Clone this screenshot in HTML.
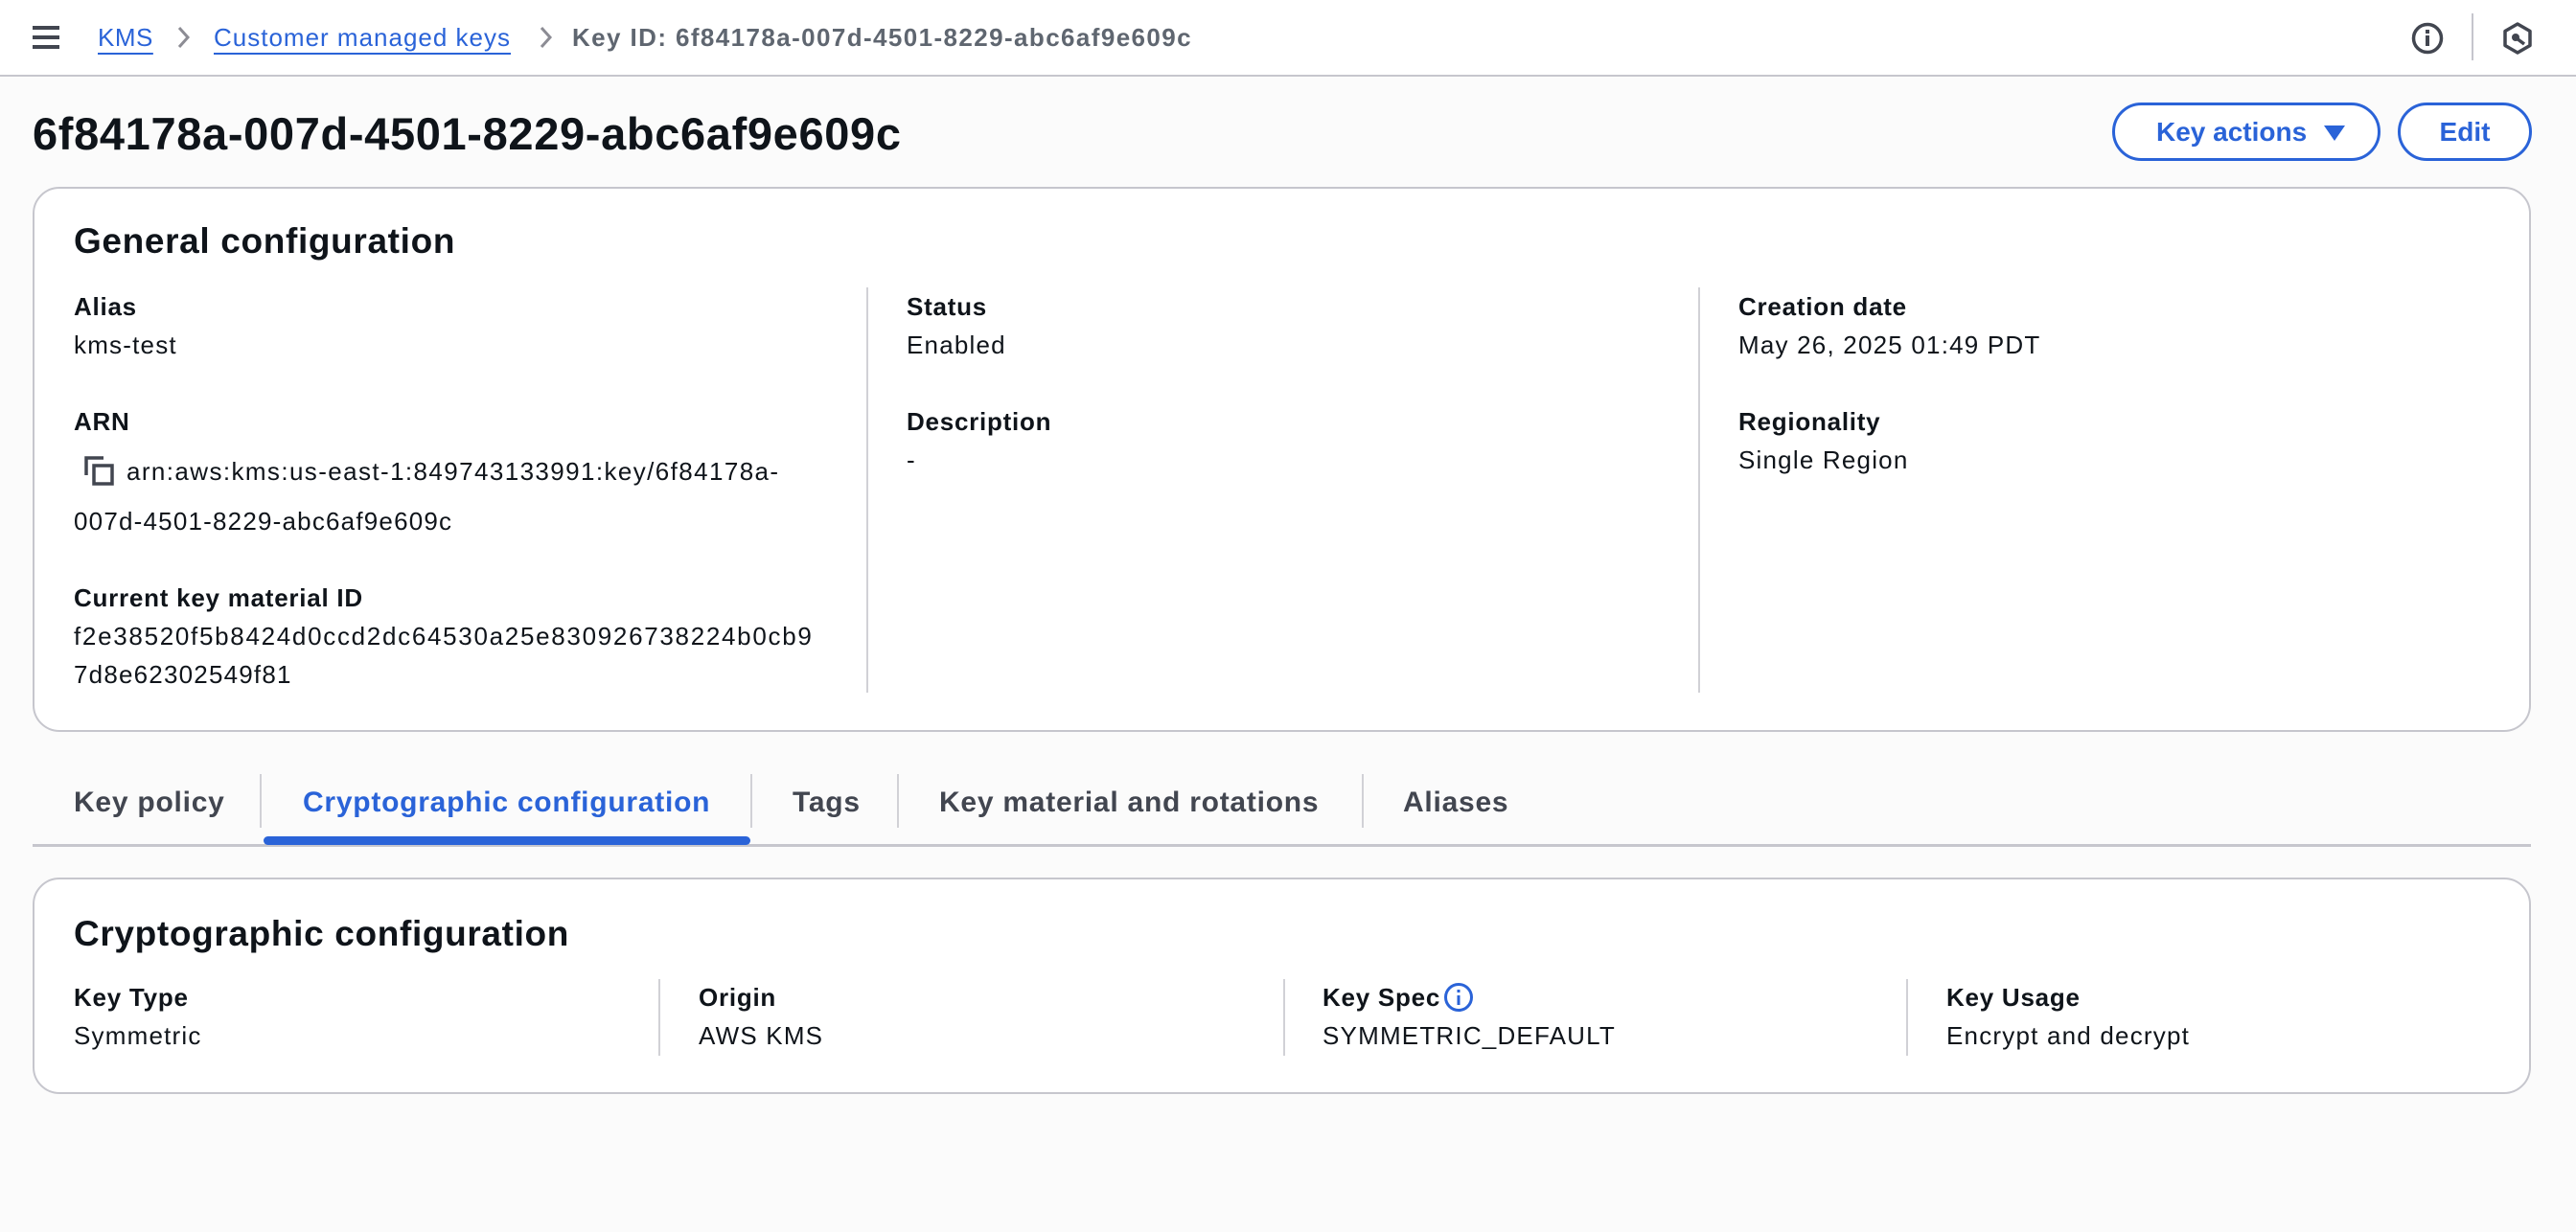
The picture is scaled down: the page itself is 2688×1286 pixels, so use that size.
<!DOCTYPE html>
<html><head><meta charset="utf-8"><style>
*{margin:0;padding:0;box-sizing:border-box}
body{width:2688px;height:1286px;background:#fbfbfb;font-family:"Liberation Sans",sans-serif;color:#0f141a;position:relative;overflow:hidden}
.a{position:absolute;white-space:nowrap}
.hdr{position:absolute;left:0;top:0;width:2688px;height:80px;background:#fff;border-bottom:2px solid #c6c6cd}
.lnk{color:#2a63d8;text-decoration:underline;text-underline-offset:7px;text-decoration-thickness:2px}
.card{position:absolute;left:34px;width:2607px;background:#fff;border:2px solid #c6c6cd;border-radius:28px}
.h2{font-size:37px;font-weight:bold;line-height:48px;letter-spacing:0.65px}
.lbl{font-size:26px;font-weight:bold;line-height:36px;letter-spacing:0.75px}
.val{font-size:26px;line-height:36px;letter-spacing:1.2px}
.vd{position:absolute;width:2px;background:#d1d1d6}
.btn{position:absolute;top:107px;height:61px;border:3px solid #2a63d8;border-radius:31px;color:#2a63d8;font-weight:bold;font-size:28px;line-height:55px;text-align:center;background:#fff}
.tab{position:absolute;top:818px;font-size:30px;font-weight:bold;line-height:40px;color:#424650;letter-spacing:0.75px}
.td{position:absolute;top:808px;height:56px;width:2px;background:#d1d1d6}
</style></head><body>
<div class="hdr"></div>
<div class="a" style="left:34px;top:27px;width:28px;height:4px;background:#424650"></div>
<div class="a" style="left:34px;top:37px;width:28px;height:4px;background:#424650"></div>
<div class="a" style="left:34px;top:47px;width:28px;height:4px;background:#424650"></div>
<div class="a lnk" style="left:102px;top:22px;font-size:26px;line-height:34px;letter-spacing:0.5px">KMS</div>
<svg class="a" style="left:184px;top:26px" width="16" height="26"><path d="M3 3 L12 13 L3 23" stroke="#8c8c94" stroke-width="3" fill="none"/></svg>
<div class="a lnk" style="left:223px;top:22px;font-size:26px;line-height:34px;letter-spacing:1px">Customer managed keys</div>
<svg class="a" style="left:562px;top:26px" width="16" height="26"><path d="M3 3 L12 13 L3 23" stroke="#8c8c94" stroke-width="3" fill="none"/></svg>
<div class="a" style="left:597px;top:22px;font-size:26px;line-height:34px;color:#5f6670;font-weight:bold;letter-spacing:1.4px">Key ID: 6f84178a-007d-4501-8229-abc6af9e609c</div>
<svg class="a" style="left:2515px;top:22px" width="36" height="36"><circle cx="18" cy="18" r="14.5" stroke="#424650" stroke-width="3.5" fill="none"/><rect x="16" y="15" width="4" height="11" fill="#424650"/><rect x="16" y="9" width="4" height="4" fill="#424650"/></svg>
<div class="a" style="left:2579px;top:14px;width:2px;height:49px;background:#c6c6cd"></div>
<svg class="a" style="left:2609px;top:22px" width="36" height="36"><path d="M18 3 L31 10.5 L31 25.5 L18 33 L5 25.5 L5 10.5 Z" stroke="#424650" stroke-width="3.5" fill="none" stroke-linejoin="round"/><circle cx="16" cy="17" r="4" fill="#424650"/><path d="M17 18 L25 24" stroke="#424650" stroke-width="3.5"/></svg>

<div class="a" style="left:34px;top:110px;font-size:47px;font-weight:bold;line-height:60px;letter-spacing:0.65px">6f84178a-007d-4501-8229-abc6af9e609c</div>
<div class="btn" style="left:2204px;width:280px;text-align:left;padding-left:43px">Key actions<svg style="position:absolute;left:217px;top:20px" width="24" height="18"><path d="M1 1 L23 1 L12 17 Z" fill="#2a63d8"/></svg></div>
<div class="btn" style="left:2502px;width:140px">Edit</div>

<div class="card" style="top:195px;height:569px"></div>
<div class="a h2" style="left:77px;top:228px">General configuration</div>
<div class="vd" style="left:904px;top:300px;height:423px"></div>
<div class="vd" style="left:1772px;top:300px;height:423px"></div>
<div class="a lbl" style="left:77px;top:302px">Alias</div>
<div class="a val" style="left:77px;top:342px">kms-test</div>
<div class="a lbl" style="left:77px;top:422px">ARN</div>
<svg class="a" style="left:88px;top:476px" width="34" height="32"><path d="M2 20 V2 H20" stroke="#424650" stroke-width="3.5" fill="none"/><rect x="10" y="10" width="19" height="19" stroke="#424650" stroke-width="3.5" fill="none"/></svg>
<div class="a val" style="left:132px;top:474px;letter-spacing:1.4px">arn:aws:kms:us-east-1:849743133991:key/6f84178a-</div>
<div class="a val" style="left:77px;top:526px">007d-4501-8229-abc6af9e609c</div>
<div class="a lbl" style="left:77px;top:606px">Current key material ID</div>
<div class="a val" style="left:77px;top:646px;letter-spacing:1.7px">f2e38520f5b8424d0ccd2dc64530a25e830926738224b0cb9</div>
<div class="a val" style="left:77px;top:686px">7d8e62302549f81</div>
<div class="a lbl" style="left:946px;top:302px">Status</div>
<div class="a val" style="left:946px;top:342px">Enabled</div>
<div class="a lbl" style="left:946px;top:422px">Description</div>
<div class="a val" style="left:946px;top:462px">-</div>
<div class="a lbl" style="left:1814px;top:302px">Creation date</div>
<div class="a val" style="left:1814px;top:342px">May 26, 2025 01:49 PDT</div>
<div class="a lbl" style="left:1814px;top:422px">Regionality</div>
<div class="a val" style="left:1814px;top:462px">Single Region</div>

<div class="tab" style="left:77px">Key policy</div>
<div class="td" style="left:271px"></div>
<div class="tab" style="left:316px;color:#2a63d8">Cryptographic configuration</div>
<div class="td" style="left:783px"></div>
<div class="tab" style="left:827px">Tags</div>
<div class="td" style="left:936px"></div>
<div class="tab" style="left:980px">Key material and rotations</div>
<div class="td" style="left:1421px"></div>
<div class="tab" style="left:1464px">Aliases</div>
<div class="a" style="left:34px;top:881px;width:2607px;height:3px;background:#c6c6cd"></div>
<div class="a" style="left:275px;top:873px;width:508px;height:9px;background:#2a63d8;border-radius:5px"></div>

<div class="card" style="top:916px;height:226px"></div>
<div class="a h2" style="left:77px;top:951px">Cryptographic configuration</div>
<div class="vd" style="left:687px;top:1022px;height:80px"></div>
<div class="vd" style="left:1339px;top:1022px;height:80px"></div>
<div class="vd" style="left:1989px;top:1022px;height:80px"></div>
<div class="a lbl" style="left:77px;top:1023px">Key Type</div>
<div class="a val" style="left:77px;top:1063px">Symmetric</div>
<div class="a lbl" style="left:729px;top:1023px">Origin</div>
<div class="a val" style="left:729px;top:1063px">AWS KMS</div>
<div class="a lbl" style="left:1380px;top:1023px">Key Spec</div>
<svg class="a" style="left:1506px;top:1025px" width="32" height="32"><circle cx="16" cy="16" r="13.5" stroke="#2a63d8" stroke-width="3" fill="none"/><rect x="14.5" y="14" width="3" height="10" fill="#2a63d8"/><rect x="14.5" y="8" width="3" height="3" fill="#2a63d8"/></svg>
<div class="a val" style="left:1380px;top:1063px">SYMMETRIC_DEFAULT</div>
<div class="a lbl" style="left:2031px;top:1023px">Key Usage</div>
<div class="a val" style="left:2031px;top:1063px">Encrypt and decrypt</div>
</body></html>
